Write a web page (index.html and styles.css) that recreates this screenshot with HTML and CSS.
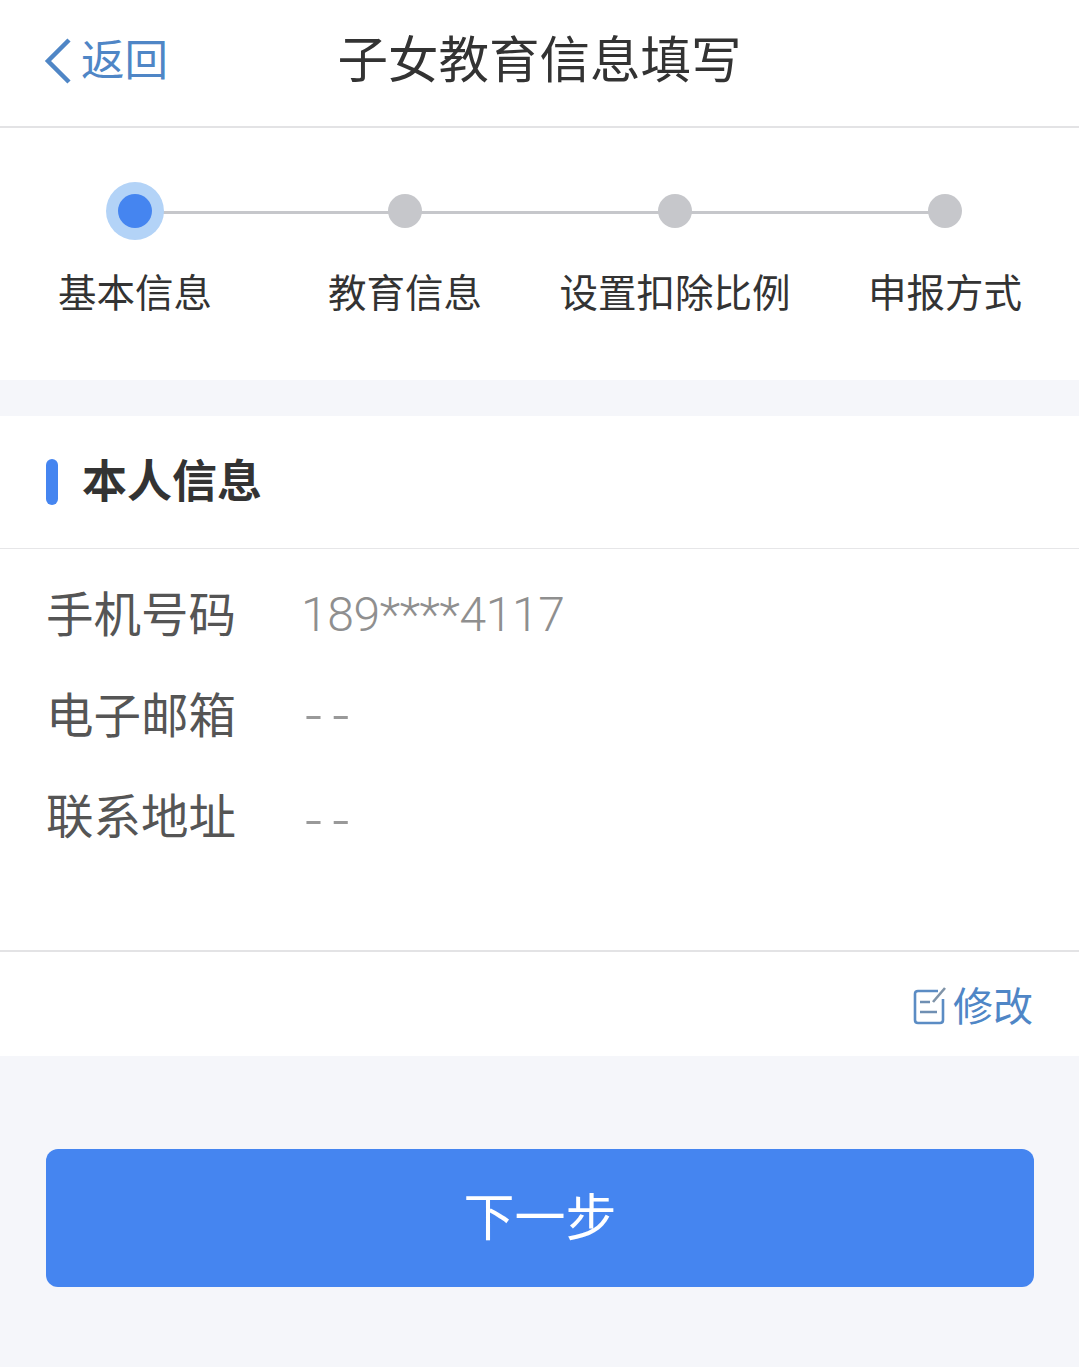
FILE: index.html
```html
<!DOCTYPE html>
<html lang="zh-CN">
<head>
	<meta charset="UTF-8">
	<title>子女教育信息填写</title>
	<link rel="stylesheet" href="styles.css">
</head>
<body>

<div class="navbar">
	<a class="back">
		<svg class="back-arrow" width="28" height="46" viewBox="0 0 28 46"><path d="M25 2 L4 23 L25 44" fill="none" stroke="#4f86c6" stroke-width="4.5"/></svg>
		<span>返回</span>
	</a>
	<h1>子女教育信息填写</h1>
</div>

<ul class="steps">
	<li class="step active"><span class="dot"></span><p>基本信息</p></li>
	<li class="step"><span class="dot"></span><p>教育信息</p></li>
	<li class="step"><span class="dot"></span><p>设置扣除比例</p></li>
	<li class="step"><span class="dot"></span><p>申报方式</p></li>
</ul>

<div class="card">
	<div class="card-title"><span class="mark"></span><h2>本人信息</h2></div>
	<div class="rows">
		<div class="row"><span class="label">手机号码</span><span class="value">189****4117</span></div>
		<div class="row"><span class="label">电子邮箱</span><span class="value dashes">--</span></div>
		<div class="row"><span class="label">联系地址</span><span class="value dashes">--</span></div>
	</div>
	<div class="card-foot">
		<a class="edit">
			<svg width="34" height="38" viewBox="0 0 34 38" fill="none" stroke="#5b8cc4" stroke-width="2.6"><path d="M25 4 H5 Q2 4 2 7 V33 Q2 36 5 36 H27 Q30 36 30 33 V12"/><path d="M7 15 H17 M7 25 H24" stroke="#6f8fb3"/><path d="M20 15 L32 1" stroke="#7f93a8"/></svg>
			<span>修改</span>
		</a>
	</div>
</div>

<div class="actions">
	<button class="next"><span>下一步</span></button>
</div>

</body>
</html>
```

FILE: styles.css
```css
body {
	margin: 0;
	padding: 0;
	background: #f5f6fa;
	color: #333;
	font-family: "Noto Sans CJK SC", sans-serif;
}

.navbar {
	height: 126px;
	background: #fff;
	border-bottom: 2px solid #e3e3e5;
	display: flex;
	align-items: center;
	justify-content: center;
	position: relative;
}

.navbar h1 {
	margin: 0 0 14px 0;
	font-size: 50.5px;
	font-weight: 400;
	line-height: 60px;
}

.back {
	position: absolute;
	left: 44px;
	top: 38px;
	display: flex;
	align-items: center;
	gap: 9px;
	color: #4f86c6;
	font-size: 43.5px;
	font-weight: 400;
	line-height: 48px;
}

.back span {
	margin-top: -6px;
}

.steps {
	list-style: none;
	margin: 0;
	padding: 66px 0 0 0;
	height: 186px;
	background: #fff;
	display: grid;
	grid-template-columns: repeat(4, 270px);
}

.step {
	position: relative;
	display: flex;
	flex-direction: column;
	align-items: center;
}

.step:not(:last-child)::after {
	content: "";
	position: absolute;
	left: 135px;
	top: 17px;
	width: 270px;
	height: 3px;
	background: #c6c7cb;
}

.step .dot {
	position: relative;
	z-index: 1;
	width: 34px;
	height: 34px;
	border-radius: 50%;
	background: #c6c7cb;
}

.step.active .dot {
	background: #4585f0;
	box-shadow: 0 0 0 12px #b3d3f7;
}

.step p {
	margin: 39px 0 0 0;
	font-size: 38.5px;
	font-weight: 400;
	line-height: 46px;
	white-space: nowrap;
}

.card {
	margin-top: 36px;
	background: #fff;
}

.card-title {
	height: 132px;
	border-bottom: 1px solid #e6e6e8;
	display: flex;
	align-items: center;
	padding-left: 46px;
}

.mark {
	width: 12px;
	height: 46px;
	border-radius: 6px;
	background: #4585f0;
	margin-right: 24px;
}

.card-title h2 {
	margin: 0 0 7px 0;
	font-size: 45px;
	font-weight: 700;
	line-height: 54px;
}

.rows {
	height: 403px;
	padding-top: 15px;
	box-sizing: border-box;
	border-bottom: 2px solid #e3e3e5;
}

.row {
	height: 101px;
	display: flex;
	align-items: center;
	padding-left: 46px;
}

.label {
	width: 255px;
	margin-top: -6px;
	font-size: 47.5px;
	font-weight: 400;
	color: #555;
	white-space: nowrap;
}

.value {
	font-family: Roboto, sans-serif;
	font-size: 48px;
	font-weight: 300;
	letter-spacing: -0.4px;
	color: #8f8f8f;
}

.dashes {
	padding-left: 4px;
	font-size: 60px;
	line-height: 60px;
	letter-spacing: 10px;
	color: #999;
}

.row:last-child .dashes {
	padding-top: 8px;
}

.card-foot {
	height: 100px;
	padding: 4px 46px 0 0;
	display: flex;
	align-items: center;
	justify-content: flex-end;
}

.edit {
	display: flex;
	align-items: center;
	gap: 6px;
	color: #4f86c6;
	font-size: 40px;
	font-weight: 400;
	line-height: 48px;
}

.edit span {
	margin-top: -4px;
}

.actions {
	padding: 93px 45px 80px 46px;
}

.next {
	display: block;
	width: 100%;
	height: 138px;
	border: 0;
	border-radius: 12px;
	background: #4585f0;
	color: #fff;
	font-family: inherit;
	font-size: 51px;
	font-weight: 400;
}

.next span {
	display: block;
	margin-top: -8px;
}
```
